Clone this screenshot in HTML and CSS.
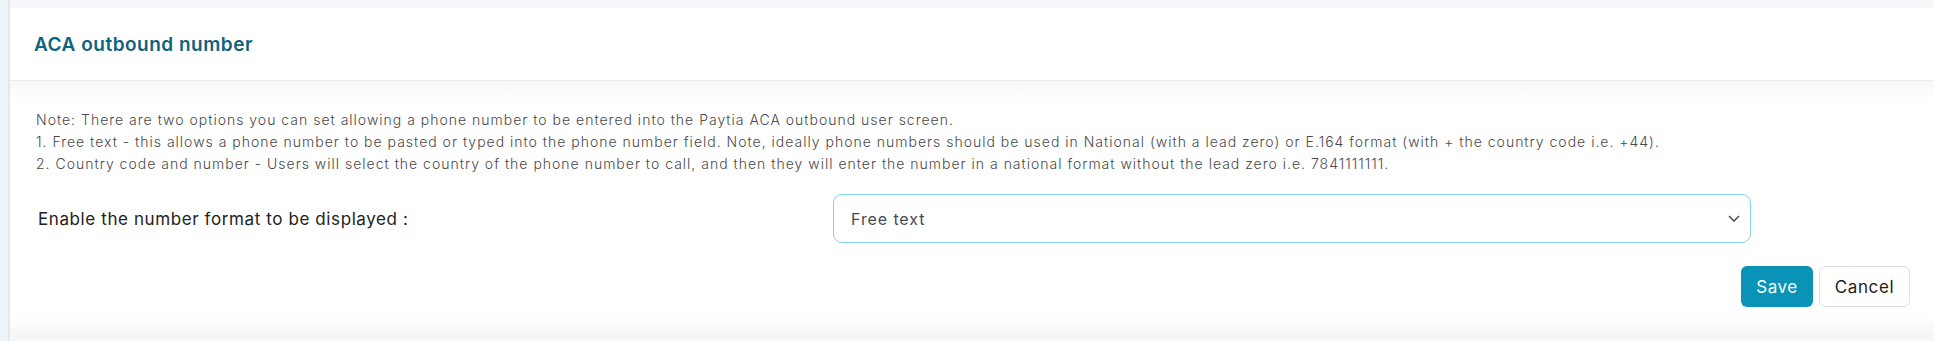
FILE: index.html
```html
<!DOCTYPE html>
<html lang="en">
<head>
    <meta charset="UTF-8">
    <meta name="viewport" content="width=device-width, initial-scale=1.0">
    <title>ACA outbound number</title>
    <link rel="stylesheet" href="styles.css">
</head>
<body>
    <div class="layout">
        <div class="sidebar"></div>
        <div class="main">
            <div class="card">
                <div class="card-header">
                    <h1>ACA outbound number</h1>
                </div>
                <div class="card-body">
                    <p class="note">
                        Note: There are two options you can set allowing a phone number to be entered into the Paytia ACA outbound user screen.<br>
                        1. Free text - this allows a phone number to be pasted or typed into the phone number field. Note, ideally phone numbers should be used in National (with a lead zero) or E.164 format (with + the country code i.e. +44).<br>
                        2. Country code and number - Users will select the country of the phone number to call, and then they will enter the number in a national format without the lead zero i.e. 7841111111.
                    </p>

                    <div class="form-row">
                        <label for="numberFormat">Enable the number format to be displayed :</label>
                        <div class="select-wrap">
                            <select id="numberFormat" name="numberFormat">
                                <option>Free text</option>
                                <option>Country code and number</option>
                            </select>
                            <svg class="chevron" width="14" height="14" viewBox="0 0 14 14">
                                <path d="M2 5 L7 10 L12 5" fill="none" stroke="#444" stroke-width="1.4"/>
                            </svg>
                        </div>
                    </div>

                    <div class="actions">
                        <button type="button" class="btn btn-save">Save</button>
                        <button type="button" class="btn btn-cancel">Cancel</button>
                    </div>
                </div>
            </div>
        </div>
    </div>
</body>
</html>
```

FILE: styles.css
```css
body {
    font-family: Inter, "Noto Sans", sans-serif;
    background-color: #f6f7f8;
    margin: 0;
    padding: 0;
    height: 341px;
    overflow: hidden;
}
.layout {
    display: flex;
    height: 341px;
}
.sidebar {
    width: 8px;
    background-color: #eef3f9;
    border-right: 2px solid #e4e8ed;
}
.main {
    flex: 1;
    padding-top: 8px;
    background-color: #f6f7f8;
}
.card {
    background-color: #ffffff;
    height: 329px;
    background-image: linear-gradient(to bottom, #ffffff 0, #ffffff 306px, #f4f6f6 329px);
}
.card-header {
    height: 72px;
    display: flex;
    align-items: center;
    padding-left: 24px;
    border-bottom: 1px solid #ebeced;
}
h1 {
    margin: 0;
    font-size: 19px;
    font-weight: 600;
    color: #0d6480;
    letter-spacing: 0.5px;
}
.card-body {
    padding: 28px 24px 0 26px;
    background-image: linear-gradient(to bottom, #f7f8f8 0, #ffffff 20px);
}
.note {
    margin: 0;
    font-size: 14px;
    font-weight: 300;
    line-height: 22px;
    color: #4a4a4a;
    letter-spacing: 1px;
}
.form-row {
    display: flex;
    align-items: center;
    margin-top: 19px;
}
label {
    flex: 1;
    font-size: 17px;
    color: #222;
    padding-left: 2px;
    letter-spacing: 0.6px;
}
.select-wrap {
    position: relative;
    width: 918px;
    margin-right: 159px;
}
select {
    width: 100%;
    height: 49px;
    padding: 0 17px;
    font-family: inherit;
    font-size: 16px;
    letter-spacing: 0.9px;
    color: #454b55;
    background-color: #fff;
    border: 1px solid #84d4ea;
    border-radius: 9px;
    appearance: none;
    -webkit-appearance: none;
}
.chevron {
    position: absolute;
    right: 10px;
    top: 17px;
}
.actions {
    display: flex;
    justify-content: flex-end;
    gap: 6px;
    margin-top: 23px;
}
.btn {
    height: 41px;
    font-family: inherit;
    font-size: 17px;
    letter-spacing: 0.6px;
    border-radius: 6px;
    cursor: pointer;
}
.btn-save {
    width: 72px;
    background-color: #0a93b6;
    color: #fff;
    border: none;
}
.btn-cancel {
    width: 91px;
    background-color: #fff;
    color: #222;
    border: 1px solid #e1e1e1;
}
```
